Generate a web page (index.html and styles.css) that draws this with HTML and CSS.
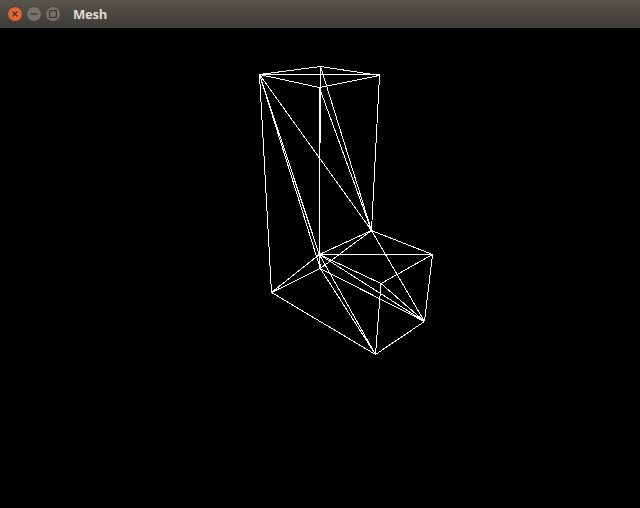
FILE: index.html
```html
<!DOCTYPE html>
<html lang="en">

    <head>
        <meta charset="UTF-8">
        <meta name="viewport" content="width=device-width, initial-scale=1.0">
        <title>Mesh</title>
        <link rel="stylesheet" href="styles.css">
    </head>

    <body>
        <header class="titlebar">
            <div class="win-buttons">
                <span class="win-btn close">
                    <svg viewBox="0 0 8 8" width="8" height="8"><path d="M1.5 1.5L6.5 6.5M6.5 1.5L1.5 6.5" /></svg>
                </span>
                <span class="win-btn">
                    <svg viewBox="0 0 8 8" width="8" height="8"><path d="M0.5 4H7.5" /></svg>
                </span>
                <span class="win-btn">
                    <svg viewBox="0 0 8 8" width="8" height="8"><rect x="0.5" y="0.5" width="7" height="7" /></svg>
                </span>
            </div>
            <span class="win-title">Mesh</span>
        </header>

        <main class="canvas">
            <!-- viewBox is offset so the points read as window pixel coordinates -->
            <svg class="mesh" viewBox="0.5 27.5 640 480" width="640" height="480">
                <!-- top face -->
                <path d="M260 74L321 66L380 75L319.8 87Z" />
                <path d="M260 74H380" />
                <!-- tall part -->
                <path d="M321 66L319.8 254" />
                <path d="M319.8 87L319.8 254" />
                <path d="M260 74L272 292" />
                <path d="M380 75L372 230" />
                <path d="M260 74L372 230" />
                <path d="M260 74L319.8 254" />
                <path d="M260 74L320.8 268" />
                <path d="M321 66L372 230" />
                <path d="M319.8 87L372 230" />
                <!-- lower box -->
                <path d="M319.8 254L372 230L433 254L381.5 283Z" />
                <path d="M319.8 254H433" />
                <path d="M372 230L320.8 268L272 292L319.8 254L320.8 268" />
                <path d="M272 292L376 354L425 321L433 254" />
                <path d="M381.5 283L376 354" />
                <path d="M381.5 283L425 321" />
                <path d="M372 230L425 321" />
                <path d="M319.8 254L425 321" />
                <path d="M320.8 268L425 321" />
                <path d="M319.8 254L376 354" />
                <path d="M320.8 268L376 354" />
            </svg>
        </main>
    </body>

</html>
```
FILE: styles.css
```css
*,
*::before,
*::after {
    box-sizing: border-box;
}

body {
    margin: 0;
    background: #000;
    overflow: hidden;
}

.titlebar {
    display: flex;
    align-items: center;
    height: 28px;
    padding-left: 7px;
    background: linear-gradient(#57544c, #3d3b36);
}

.win-buttons {
    display: flex;
    gap: 3px;
}

.win-btn {
    display: flex;
    align-items: center;
    justify-content: center;
    width: 16px;
    height: 16px;
    border-radius: 50%;
    background: #75736c;
    border: 1px solid #45433d;
}

.win-btn.close {
    background: radial-gradient(circle, #f0764a, #e0501f);
}

.win-btn svg {
    fill: none;
    stroke: #3a3833;
    stroke-width: 1.4;
}

.win-title {
    margin-left: 12px;
    font-family: "Open Sans", sans-serif;
    font-size: 13px;
    font-weight: 700;
    letter-spacing: -0.2px;
    color: #dfdbd2;
}

.canvas {
    height: 480px;
    background: #000;
}

.mesh {
    display: block;
}

.mesh path {
    fill: none;
    stroke: #fff;
    stroke-width: 1;
    shape-rendering: crispEdges;
}
```
